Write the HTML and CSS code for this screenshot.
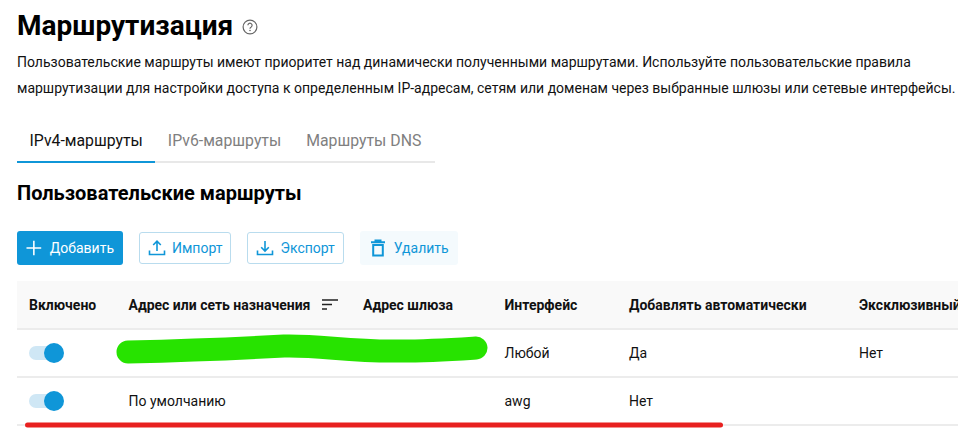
FILE: index.html
```html
<!DOCTYPE html>
<html lang="ru">
<head>
<meta charset="utf-8">
<title>Маршрутизация</title>
<link rel="stylesheet" href="styles.css">
</head>
<body>
<main class="page">
  <header class="title-row">
    <h1 class="title">Маршрутизация</h1>
    <svg class="help" viewBox="0 0 16 16" width="16" height="16"><circle cx="8" cy="8" r="6.9" fill="none" stroke="#666" stroke-width="1.2"/><path d="M5.9 6.3a2.1 2.1 0 1 1 3.3 1.7c-.8.5-1.2.9-1.2 1.7" fill="none" stroke="#666" stroke-width="1.2"/><circle cx="8" cy="11.5" r=".8" fill="#666"/></svg>
  </header>
  <p class="desc">Пользовательские маршруты имеют приоритет над динамически полученными маршрутами. Используйте пользовательские правила<br>маршрутизации для настройки доступа к определенным IP-адресам, сетям или доменам через выбранные шлюзы или сетевые интерфейсы.</p>
  <nav class="tabs">
    <a class="tab tab-active">IPv4-маршруты</a>
    <a class="tab">IPv6-маршруты</a>
    <a class="tab">Маршруты DNS</a>
  </nav>
  <h2 class="section">Пользовательские маршруты</h2>
  <div class="toolbar">
    <button class="btn btn-primary"><svg viewBox="0 0 16 16" width="16" height="16"><path d="M8 .5v15M.5 8h15" stroke="#fff" stroke-width="1.6" fill="none"/></svg>Добавить</button>
    <button class="btn btn-outline"><svg viewBox="0 0 18 18" width="18" height="18"><path d="M9 12V2.5M5.2 6 9 2.2 12.800 6M1.500 11.500v4h15v-4" stroke="#0f96d8" stroke-width="1.6" fill="none"/></svg>Импорт</button>
    <button class="btn btn-outline"><svg viewBox="0 0 18 18" width="18" height="18"><path d="M9 2v9.600M5.200 8.200 9 12l3.800-3.800M1.500 11.500v4h15v-4" stroke="#0f96d8" stroke-width="1.6" fill="none"/></svg>Экспорт</button>
    <button class="btn btn-soft"><svg viewBox="0 0 16 18" width="16" height="18"><path d="M1 3.200h14M4.500 1.500h7M3.200 6h9.600v10.500H3.200z" stroke="#0f96d8" stroke-width="2" fill="none"/></svg>Удалить</button>
  </div>
  <div class="table">
    <div class="tr th">
      <div class="c1">Включено</div>
      <div class="c2">Адрес или сеть назначения<svg class="sort" viewBox="0 0 16 12" width="16" height="12"><path d="M0 1h16M0 5.500h10M0 10h5" stroke="#222" stroke-width="1.600" fill="none"/></svg></div>
      <div class="c3">Адрес шлюза</div>
      <div class="c4">Интерфейс</div>
      <div class="c5">Добавлять автоматически</div>
      <div class="c6">Эксклюзивный</div>
    </div>
    <div class="tr">
      <div class="c1"><span class="switch"></span></div>
      <div class="c2"></div>
      <div class="c3"></div>
      <div class="c4">Любой</div>
      <div class="c5">Да</div>
      <div class="c6">Нет</div>
    </div>
    <div class="tr">
      <div class="c1"><span class="switch"></span></div>
      <div class="c2">По умолчанию</div>
      <div class="c3"></div>
      <div class="c4">awg</div>
      <div class="c5">Нет</div>
      <div class="c6"></div>
    </div>
  </div>
</main>
<svg class="scribble" viewBox="0 0 971 434" width="971" height="434">
  <path d="M128 352C170 351 230 349 284 346C320 345 350 352 400 351C430 351 460 349 476 348" stroke="#27e300" stroke-width="23" stroke-linecap="round" fill="none"/>
  <path d="M27.500 425H720.500" stroke="#e8201f" stroke-width="5" stroke-linecap="round" fill="none"/>
</svg>
</body>
</html>
```
FILE: styles.css
```css
* { box-sizing: border-box; }
html, body { margin: 0; height: 100%; overflow: hidden; background: #fff; }
body { font-family: Roboto, "Liberation Sans", sans-serif; color: #111; position: relative; }
.page { padding: 0 13px 0 17px; width: 971px; }
.title-row { display: flex; align-items: center; gap: 9px; height: 52px; }
.title { margin: 0; font-size: 28px; font-weight: 700; line-height: 52px; color: #000; }
.help { margin-top: 2px; }
.desc { margin: -2px 0 0; font-size: 14px; line-height: 25.500px; white-space: nowrap; height: 51px; }
.tabs { display: flex; width: 418px; margin-top: 17px; border-bottom: 2px solid #e8e8e8; height: 45px; }
.tab { flex: none; white-space: nowrap; padding: 0 12.500px; font-size: 15.800px; line-height: 46px; color: #808080; height: 45px; }
.tab-active { color: #111; border-bottom: 2px solid #0f96d8; }
.section { margin: 16px 0 0; font-size: 20px; font-weight: 700; line-height: 28px; color: #000; }
.toolbar { display: flex; align-items: center; gap: 16px; margin-top: 24px; height: 34px; }
.btn { display: flex; align-items: center; gap: 6px; font-family: inherit; font-size: 14px; border-radius: 3px; color: #0f96d8; background: #fff; padding: 0 8px; height: 32px; border: 1px solid #b9dcee; }
.btn-primary { height: 34px; background: #0f96d8; border: 0; color: #fff; width: 106px; padding: 0 9px; gap: 8px; }
.btn-soft { height: 34px; background: #f4fafd; border: 0; gap: 8px; padding: 0 9px 0 10px; }
.table { margin-top: 16px; width: 941px; overflow: hidden; font-size: 14px; }
.tr { display: grid; grid-template-columns: 99.500px 234.500px 141.500px 124.500px 230px 112px; height: 48px; align-items: center; border-bottom: 2px solid #ececec; white-space: nowrap; }
.th { background: #f9f9f9; font-weight: 700; height: 49px; }
.tr > div { padding-left: 12px; }
.tr > .c2 { display: flex; align-items: center; gap: 12px; }
.switch { display: block; position: relative; width: 35px; height: 20px; }
.switch::before { content: ""; position: absolute; left: 0; top: 3px; width: 32px; height: 14px; border-radius: 7px; background: #cfe7f5; }
.switch::after { content: ""; position: absolute; right: 0; top: 0; width: 20px; height: 20px; border-radius: 50%; background: #0f96d8; }
.scribble { position: absolute; left: 0; top: 0; pointer-events: none; }
```
